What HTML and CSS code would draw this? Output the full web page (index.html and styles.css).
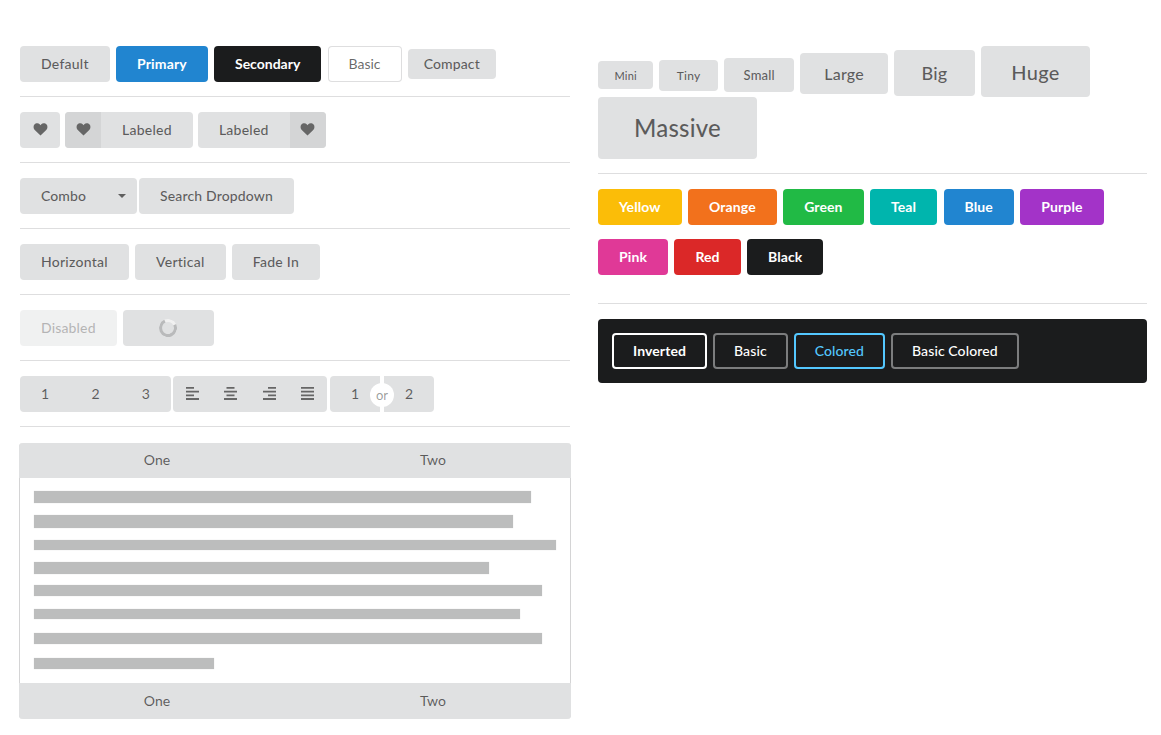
FILE: index.html
```html
<!DOCTYPE html>
<html lang="en">
<head>
    <meta charset="UTF-8">
    <meta name="viewport" content="width=device-width, initial-scale=1.0">
    <title>Buttons</title>
    <link rel="stylesheet" href="styles.css">
</head>
<body>

    <svg class="sprites" width="0" height="0">
        <symbol id="heart" viewBox="0 0 14 13">
            <path d="M7 12.600 1.500 7.200C-.3 5.400-.3 3 .9 1.600 2.200 0 4.900-.1 6.200 1.300L7 2.200l.8-.9C9.100-.1 11.800 0 13.100 1.600c1.200 1.400 1.200 3.800-.6 5.600z"/>
        </symbol>
    </svg>

    <div class="page">
        <!-- left column -->
        <div class="column">
            <div class="row">
                <button class="btn">Default</button>
                <button class="btn primary">Primary</button>
                <button class="btn secondary">Secondary</button>
                <button class="btn basic">Basic</button>
                <button class="btn compact">Compact</button>
            </div>
            <hr>
            <div class="row tight">
                <button class="btn icon-only"><svg class="heart"><use href="#heart"/></svg></button>
                <button class="btn labeled"><span class="label-icon"><svg class="heart"><use href="#heart"/></svg></span><span class="label-text">Labeled</span></button>
                <button class="btn labeled right"><span class="label-text">Labeled</span><span class="label-icon"><svg class="heart"><use href="#heart"/></svg></span></button>
            </div>
            <hr>
            <div class="row">
                <button class="btn combo">Combo<span class="caret"></span></button>
                <button class="btn search-drop">Search Dropdown</button>
            </div>
            <hr>
            <div class="row">
                <button class="btn">Horizontal</button>
                <button class="btn">Vertical</button>
                <button class="btn">Fade In</button>
            </div>
            <hr>
            <div class="row">
                <button class="btn disabled">Disabled</button>
                <button class="btn loading"><span class="loader"></span></button>
            </div>
            <hr>
            <div class="row groups">
                <div class="group numbers">
                    <span>1</span><span>2</span><span>3</span>
                </div>
                <div class="group aligns">
                    <span><svg class="align" viewBox="0 0 13 13"><path d="M0 0h8v1.800H0zM0 3.700h13v1.800H0zM0 7.400h8v1.800H0zM0 11.100h13v1.800H0z"/></svg></span>
                    <span><svg class="align" viewBox="0 0 13 13"><path d="M2.500 0h8v1.800h-8zM0 3.700h13v1.800H0zM2.500 7.400h8v1.800h-8zM0 11.100h13v1.800H0z"/></svg></span>
                    <span><svg class="align" viewBox="0 0 13 13"><path d="M5 0h8v1.800H5zM0 3.700h13v1.800H0zM5 7.400h8v1.800H5zM0 11.100h13v1.800H0z"/></svg></span>
                    <span><svg class="align" viewBox="0 0 13 13"><path d="M0 0h13v1.800H0zM0 3.700h13v1.800H0zM0 7.400h13v1.800H0zM0 11.100h13v1.800H0z"/></svg></span>
                </div>
                <div class="group split">
                    <span class="split-left">1<i class="or">or</i></span>
                    <span class="split-right">2</span>
                </div>
            </div>
            <hr>
            <div class="attached">
                <div class="attached-bar"><span>One</span><span>Two</span></div>
                <div class="attached-body">
                    <div class="bar" style="width: 497px"></div>
                    <div class="bar" style="width: 479px"></div>
                    <div class="bar" style="width: 522px"></div>
                    <div class="bar" style="width: 455px"></div>
                    <div class="bar" style="width: 508px"></div>
                    <div class="bar" style="width: 486px"></div>
                    <div class="bar" style="width: 508px"></div>
                    <div class="bar" style="width: 180px"></div>
                </div>
                <div class="attached-bar"><span>One</span><span>Two</span></div>
            </div>
        </div>

        <!-- right column -->
        <div class="column">
            <div class="row sizes">
                <button class="btn mini">Mini</button>
                <button class="btn tiny">Tiny</button>
                <button class="btn small">Small</button>
                <button class="btn large">Large</button>
                <button class="btn big">Big</button>
                <button class="btn huge">Huge</button>
                <button class="btn massive">Massive</button>
            </div>
            <hr>
            <div class="row colors">
                <button class="btn solid yellow">Yellow</button>
                <button class="btn solid orange">Orange</button>
                <button class="btn solid green">Green</button>
                <button class="btn solid teal">Teal</button>
                <button class="btn solid blue">Blue</button>
                <button class="btn solid purple">Purple</button>
                <button class="btn solid pink">Pink</button>
                <button class="btn solid red">Red</button>
                <button class="btn solid black">Black</button>
            </div>
            <hr>
            <div class="dark-panel">
                <button class="btn outline inverted">Inverted</button>
                <button class="btn outline">Basic</button>
                <button class="btn outline colored">Colored</button>
                <button class="btn outline">Basic Colored</button>
            </div>
        </div>
    </div>

</body>
</html>
```

FILE: styles.css
```css
* {
    box-sizing: border-box;
}
body {
    margin: 0;
    background: #fff;
    font-family: 'Lato', 'Liberation Sans', sans-serif;
    font-size: 14px;
    color: rgba(0, 0, 0, 0.6);
}
.sprites {
    display: block;
    position: absolute;
}
.page {
    display: grid;
    grid-template-columns: 550px 549px;
    column-gap: 28px;
    padding: 46px 14px 16px 20px;
}
hr {
    border: 0;
    border-top: 1px solid #dededf;
    margin: 14px 0 15px;
}
.row {
    display: flex;
    flex-wrap: wrap;
    gap: 6.2px;
    align-items: center;
}
.row.tight { gap: 5px; }

/* buttons */
.btn {
    display: inline-block;
    font-family: inherit;
    font-size: 14px;
    font-weight: 500;
    letter-spacing: 0.25px;
    line-height: 1;
    min-height: 1em;
    padding: 0.785em 1.5em;
    border: 0;
    border-radius: 4px;
    background: #e0e1e2;
    color: rgba(0, 0, 0, 0.6);
}
.primary { background: #2185d0; color: #fff; font-weight: 700; letter-spacing: 0.15px; }
.secondary { background: #1b1c1d; color: #fff; font-weight: 700; letter-spacing: 0; }
.basic {
    background: #fff;
    font-weight: 400;
    letter-spacing: 0;
    color: rgba(0, 0, 0, 0.6);
    box-shadow: inset 0 0 0 1px rgba(34, 36, 38, 0.15);
}
.compact { padding: 8px 16px; letter-spacing: 0.1px; }

.heart {
    display: block;
    width: 15px;
    height: 13px;
    fill: #666;
}
.icon-only { padding: 11px 12.5px 12px; }
.labeled {
    display: inline-flex;
    padding: 0;
    overflow: hidden;
    height: 36px;
    align-items: center;
}
.labeled .label-icon {
    display: flex;
    align-items: center;
    justify-content: center;
    width: 36px;
    height: 36px;
    background: #d4d5d6;
}
.labeled .label-text {
    padding: 0 21px;
}

.combo {
    display: inline-flex;
    align-items: center;
    justify-content: space-between;
    width: 117px;
    padding-right: 11px;
    letter-spacing: 0.1px;
}
.caret {
    width: 0;
    height: 0;
    border-left: 4px solid transparent;
    border-right: 4px solid transparent;
    border-top: 4px solid #5f5f5f;
}
.search-drop { margin-left: -4.2px; letter-spacing: 0.15px; }

.disabled { opacity: 0.45; letter-spacing: 0.15px; }
.loading { width: 91px; height: 36px; padding: 0; display: flex; align-items: center; justify-content: center; }
.loader {
    width: 18px;
    height: 18px;
    border-radius: 50%;
    border: 3px solid #b9babb;
    border-top-color: #f1f1f1;
    transform: rotate(20deg);
}

.groups { gap: 2px; }
.group {
    display: flex;
    height: 36px;
    border-radius: 4px;
    background: #e0e1e2;
    align-items: center;
    font-weight: 400;
}
.numbers { width: 151px; }
.numbers span {
    width: 50.300px;
    text-align: center;
}
.aligns svg {
    display: block;
}
.aligns span {
    width: 38.500px;
    display: flex;
    justify-content: center;
}
.align {
    width: 13px;
    height: 13px;
    fill: #666;
}
.split {
    background: none;
    margin-left: 1px;
}
.split span {
    display: flex;
    align-items: center;
    height: 36px;
    background: #e0e1e2;
}
.split-left {
    position: relative;
    width: 50px;
    padding-left: 21px;
    border-radius: 4px 0 0 4px;
}
.split-right {
    width: 50px;
    margin-left: 4px;
    padding-left: 21px;
    border-radius: 0 4px 4px 0;
}
.or {
    position: absolute;
    right: -14px;
    top: 7px;
    width: 24px;
    height: 24px;
    border-radius: 50%;
    background: #fff;
    font-style: normal;
    font-size: 13px;
    line-height: 24px;
    text-align: center;
    color: rgba(0, 0, 0, 0.4);
}

/* attached segment */
.attached {
    margin: 16px -1px 0;
    border: 1px solid #d4d4d5;
    border-width: 0 1px;
    border-radius: 4px;
}
.attached-bar {
    display: grid;
    grid-template-columns: 276px 276px;
    margin: 0 -1px;
    height: 35px;
    padding-bottom: 2px;
    align-items: center;
    text-align: center;
    background: #e0e1e2;
    border-radius: 4px 4px 0 0;
}
.attached-bar:last-child { height: 36px; padding-bottom: 0; border-radius: 0 0 4px 4px; }
.attached-body {
    display: flex;
    flex-direction: column;
    padding: 13px 14px 14px;
}
/* the lines of a stretched placeholder picture, none quite the same */
.bar { height: 11px; background: #bcbdbd; box-shadow: 0 0 1px #d8d8d8; }
.bar:nth-child(1) { height: 12px; }
.bar:nth-child(2) { height: 13px; margin-top: 12px; }
.bar:nth-child(3) { height: 10px; margin-top: 12px; }
.bar:nth-child(4) { height: 12px; margin-top: 12px; }
.bar:nth-child(5) { margin-top: 11px; }
.bar:nth-child(6) { height: 10px; margin-top: 13px; }
.bar:nth-child(7) { margin-top: 14px; }
.bar:nth-child(8) { margin-top: 14px; }

/* sizes */
.sizes {
    gap: 0 3.5px;
    align-items: baseline;
}
.sizes .btn { margin-right: 0.18em; letter-spacing: 0.015em; }
.mini { font-size: 11px; }
.tiny { font-size: 12px; }
.small { font-size: 13px; }
.large { font-size: 16px; }
.big { font-size: 18px; }
.huge { font-size: 20px; }
.sizes .massive { font-size: 24px; letter-spacing: 0.008em; }

/* colours */
.colors { gap: 14px 6.4px; margin-bottom: 28px; }
.solid { color: #fff; font-weight: 700; letter-spacing: 0.1px; }
.yellow { background: #fbbd08; }
.orange { background: #f2711c; }
.green { background: #21ba45; }
.teal { background: #00b5ad; }
.blue { background: #2185d0; }
.purple { background: #a333c8; }
.pink { background: #e03997; }
.red { background: #db2828; }
.black { background: #1b1c1d; }

/* dark panel */
.dark-panel {
    display: flex;
    gap: 6px;
    padding: 14px;
    background: #1b1c1d;
    border-radius: 4px;
}
.outline {
    background: transparent;
    color: #fff;
    letter-spacing: 0.1px;
    box-shadow: inset 0 0 0 2px #7c7d7e;
}
.inverted { font-weight: 700; box-shadow: inset 0 0 0 2px #fff; }
.colored { color: #54c8ff; box-shadow: inset 0 0 0 2px #54c8ff; }
```
